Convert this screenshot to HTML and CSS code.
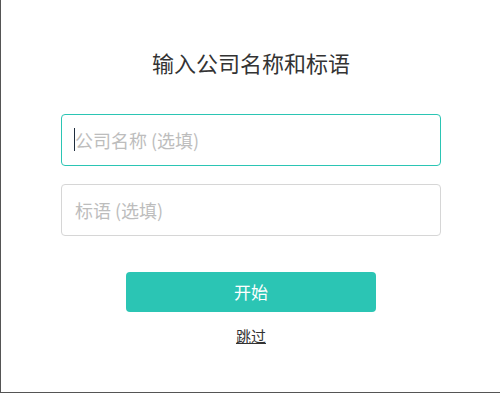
FILE: index.html
```html
<!DOCTYPE html>
<html lang="zh-CN">
<head>
<meta charset="utf-8">
<title>输入公司名称和标语</title>
<link rel="stylesheet" href="styles.css">
</head>
<body>
<div class="frame">
  <div class="panel">
    <h1 class="title">输入公司名称和标语</h1>
    <form class="form">
      <div class="field-wrap">
        <input class="field field-active" type="text" placeholder="公司名称 (选填)">
        <span class="caret"></span>
      </div>
      <input class="field field-second" type="text" placeholder="标语 (选填)">
      <button class="start" type="button">开始</button>
      <a class="skip" href="#">跳过</a>
    </form>
  </div>
</div>
</body>
</html>
```
FILE: styles.css
```css
html, body {
  margin: 0;
  padding: 0;
  background: #ffffff;
}
body {
  font-family: "Noto Sans CJK SC", "Noto Sans", sans-serif;
}
.frame {
  width: 500px;
  height: 393px;
  box-sizing: border-box;
  border-left: 1px solid #555555;
  border-bottom: 1px solid #555555;
  overflow: hidden;
}
.panel {
  display: flex;
  flex-direction: column;
  align-items: center;
  padding-top: 47px;
  padding-left: 1px;
}
.title {
  margin: 0;
  font-size: 22px;
  line-height: 30px;
  font-weight: 400;
  color: #333333;
}
.form {
  margin-top: 37px;
  display: flex;
  flex-direction: column;
  align-items: center;
}
.field-wrap {
  position: relative;
  width: 380px;
  height: 52px;
}
.field {
  display: block;
  width: 380px;
  height: 52px;
  box-sizing: border-box;
  border: 1px solid #d6d6d6;
  border-radius: 4px;
  padding: 0 12px 0 13px;
  font-family: "Noto Sans CJK SC", "Noto Sans", sans-serif;
  font-size: 18px;
  color: #333333;
  outline: none;
  background: #ffffff;
}
.field-second {
  margin-top: 18px;
}
.field::placeholder {
  color: #bdbdbd;
}
.field-active {
  border-color: #2bc5b4;
}
.caret {
  position: absolute;
  left: 13px;
  top: 14px;
  width: 1px;
  height: 23px;
  background: #1f2d3d;
}
.start {
  margin-top: 36px;
  width: 250px;
  height: 40px;
  border: none;
  border-radius: 4px;
  background: #2bc5b4;
  color: #ffffff;
  font-family: "Noto Sans CJK SC", "Noto Sans", sans-serif;
  font-size: 17px;
  line-height: 40px;
  padding: 0;
  cursor: pointer;
}
.skip {
  margin-top: 14px;
  font-size: 15px;
  line-height: 20px;
  color: #333333;
  text-decoration: underline;
}
```
